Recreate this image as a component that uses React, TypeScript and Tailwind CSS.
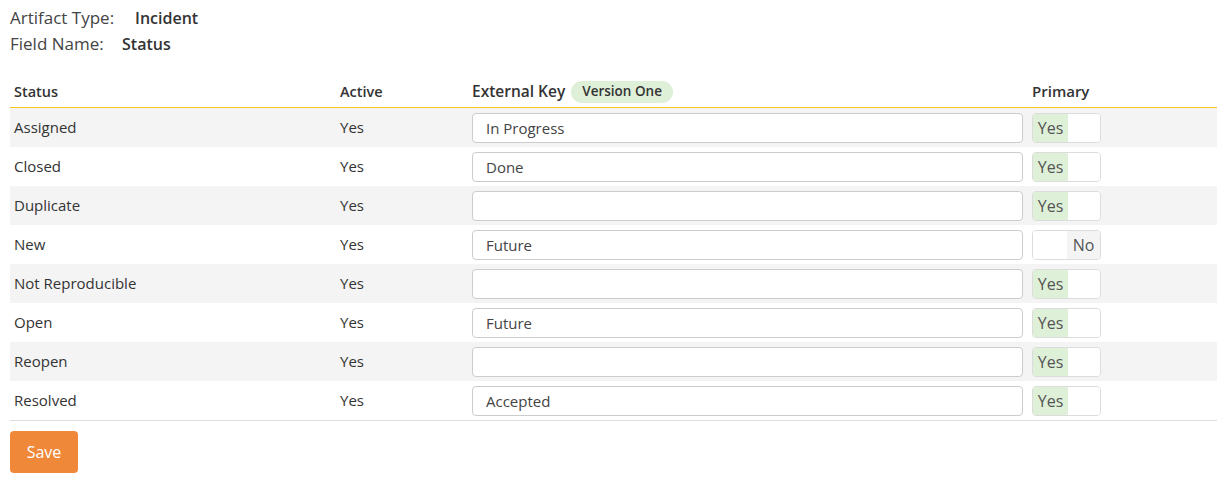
const rows: { name: string; key: string; primary: boolean }[] = [
  { name: "Assigned", key: "In Progress", primary: true },
  { name: "Closed", key: "Done", primary: true },
  { name: "Duplicate", key: "", primary: true },
  { name: "New", key: "Future", primary: false },
  { name: "Not Reproducible", key: "", primary: true },
  { name: "Open", key: "Future", primary: true },
  { name: "Reopen", key: "", primary: true },
  { name: "Resolved", key: "Accepted", primary: true },
];

const Toggle = ({ on }: { on: boolean }) => (
  <div className="w-[69px] h-[30px] flex border border-[#dcdcdc] rounded-[4px] overflow-hidden bg-white text-[16px] text-[#555]">
    {on ? (
      <>
        <div className="w-[35px] h-full bg-[#dff0d8] flex items-center justify-center">Yes</div>
        <div className="flex-1 bg-white" />
      </>
    ) : (
      <>
        <div className="flex-1 bg-white" />
        <div className="w-[33px] h-full bg-[#f4f4f4] flex items-center justify-center">No</div>
      </>
    )}
  </div>
);

export default function App() {
  return (
    <div
      className="w-[1227px] h-[485px] bg-white text-[#333] text-[15px] px-[10px] pt-[7px]"
      style={{ fontFamily: '"Open Sans", "Noto Sans", sans-serif' }}
    >
      <div className="flex flex-col gap-[4px]">
        <div className="flex items-center h-[22px]">
          <span className="text-[#444] text-[17px] w-[125px]">Artifact Type:</span>
          <span className="font-semibold text-[16px]">Incident</span>
        </div>
        <div className="flex items-center h-[22px]">
          <span className="text-[#444] text-[17px] w-[112px]">Field Name:</span>
          <span className="font-semibold text-[16px]">Status</span>
        </div>
      </div>

      <div className="mt-[21px] w-[1207px]">
        {/* header */}
        <div className="grid grid-cols-[326px_132px_560px_189px] h-[32px] items-center border-b border-[#f5c518] text-[14.5px] font-semibold">
          <div className="px-[4px]">Status</div>
          <div className="px-[4px]">Active</div>
          <div className="px-[4px] flex items-center gap-[6px]">
            <span className="text-[15.5px]">External Key</span>
            <span className="bg-[#dff0d8] rounded-full px-[11px] h-[22px] flex items-center text-[13.5px]">
              Version One
            </span>
          </div>
          <div className="px-[4px] text-[15px]">Primary</div>
        </div>

        {rows.map((r, i) => (
          <div
            key={r.name}
            className={
              "grid grid-cols-[326px_132px_560px_189px] h-[39px] items-center " +
              (i % 2 === 0 ? "bg-[#f4f4f4]" : "bg-white")
            }
          >
            <div className="px-[4px]">{r.name}</div>
            <div className="px-[4px]">Yes</div>
            <div className="px-[4px]">
              <input
                readOnly
                value={r.key}
                className="w-[551px] h-[30px] border border-[#ccc] rounded-[4px] bg-white px-[13px] text-[15px] text-[#444] outline-none"
              />
            </div>
            <div className="px-[4px]">
              <Toggle on={r.primary} />
            </div>
          </div>
        ))}
        <div className="border-t border-[#ddd]" />
      </div>

      <button className="mt-[10px] w-[68px] h-[42px] bg-[#f0883a] text-white rounded-[4px] text-[16px]">
        Save
      </button>
    </div>
  );
}
